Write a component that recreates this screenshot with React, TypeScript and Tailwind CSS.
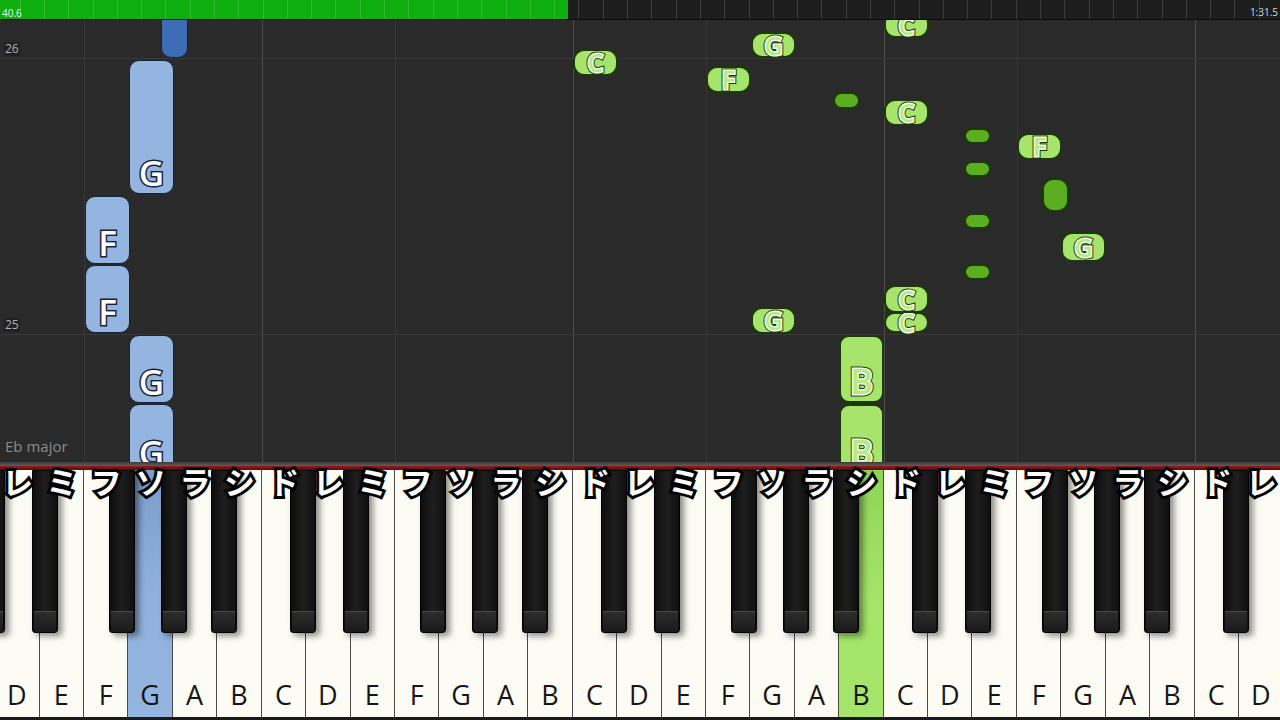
import React from 'react';

const W = 44.43;
const X0 = -4.8;
const WHITE = ['D', 'E', 'F', 'G', 'A', 'B', 'C'];
const KANA = ['レ', 'ミ', 'フ', 'ソ', 'ラ', 'シ', 'ド'];
const BLACK_OFFSET: Record<string, number> = { C: -3.5, D: 5, F: -6.5, G: 1, A: 7 };

type Kind = 'blue' | 'bdark' | 'green' | 'gdark';
type Note = { x: number; y: number; w: number; h: number; kind: Kind; label?: string };

// page coordinates, roll starts at y=20
const notes: Note[] = [
  { x: 161, y: 0, w: 27, h: 58, kind: 'bdark' },
  { x: 129, y: 60, w: 45, h: 134, kind: 'blue', label: 'G' },
  { x: 85, y: 196, w: 45, h: 68, kind: 'blue', label: 'F' },
  { x: 85, y: 265, w: 45, h: 68, kind: 'blue', label: 'F' },
  { x: 129, y: 335, w: 45, h: 68, kind: 'blue', label: 'G' },
  { x: 129, y: 404, w: 45, h: 70, kind: 'blue', label: 'G' },
  { x: 573, y: 49, w: 45, h: 27, kind: 'green', label: 'C' },
  { x: 751, y: 32, w: 45, h: 26, kind: 'green', label: 'G' },
  { x: 706, y: 66, w: 45, h: 27, kind: 'green', label: 'F' },
  { x: 833, y: 92, w: 27, h: 17, kind: 'gdark' },
  { x: 884, y: 12, w: 45, h: 26, kind: 'green', label: 'C' },
  { x: 884, y: 99, w: 45, h: 27, kind: 'green', label: 'C' },
  { x: 964, y: 128, w: 27, h: 16, kind: 'gdark' },
  { x: 964, y: 161, w: 27, h: 16, kind: 'gdark' },
  { x: 964, y: 213, w: 27, h: 16, kind: 'gdark' },
  { x: 964, y: 264, w: 27, h: 16, kind: 'gdark' },
  { x: 1017, y: 133, w: 45, h: 27, kind: 'green', label: 'F' },
  { x: 1042, y: 178, w: 27, h: 34, kind: 'gdark' },
  { x: 1061, y: 232, w: 45, h: 30, kind: 'green', label: 'G' },
  { x: 884, y: 312, w: 45, h: 21, kind: 'green', label: 'C' },
  { x: 884, y: 285, w: 45, h: 28, kind: 'green', label: 'C' },
  { x: 751, y: 307, w: 45, h: 27, kind: 'green', label: 'G' },
  { x: 839, y: 335, w: 45, h: 68, kind: 'green', label: 'B' },
  { x: 839, y: 404, w: 45, h: 70, kind: 'green', label: 'B' },
];

const noteClass: Record<Kind, string> = {
  blue: 'bg-[#94b5df] border-[1.5px] border-[#16223a]',
  bdark: 'bg-[#3b6cb4] border-[1.5px] border-[#16223a] rounded-[7px]',
  green: 'bg-[#a6e46c] border-2 border-[#1c3a08]',
  gdark: 'bg-[#5aae20] border-2 border-[#1c3a08] rounded-[7px]',
};

const whiteKeys = Array.from({ length: 29 }, (_, i) => WHITE[i % 7]);

const blackKeys: number[] = [];
// C# left of first D
blackKeys.push(X0 + BLACK_OFFSET.C - 13);
whiteKeys.forEach((n, i) => {
  if (i < 28 && BLACK_OFFSET[n] !== undefined) {
    blackKeys.push(X0 + W * (i + 1) + BLACK_OFFSET[n] - 13);
  }
});

const GreenLetter: React.FC<{ label: string; big: boolean }> = ({ label, big }) => (
  <span className={`grid leading-none font-semibold ${big ? 'text-[35px]' : 'text-[25px]'}`}>
    <span className="col-start-1 row-start-1 text-[#1c3a08] [-webkit-text-stroke:5px_#1c3a08]">{label}</span>
    <span className="col-start-1 row-start-1 text-[#b4ec80] [-webkit-text-stroke:3px_#f6fff0] [paint-order:stroke_fill]">
      {label}
    </span>
  </span>
);

const App: React.FC = () => {
  return (
    <div className="w-[1280px] h-[720px] overflow-hidden bg-[#2a2a2a] font-['Open_Sans',sans-serif]">
      {/* Progress bar */}
      <div className="relative h-[20px] bg-[#1d1d1d] border-b border-[#0b0b0b]">
        <div className="h-full w-[568px] bg-[#0fae0f]" />
        <div className="absolute inset-0 flex ml-[-3.7px]">
          {Array.from({ length: 54 }).map((_, i) => (
            <div key={i} className="h-full w-[24.3px] shrink-0 border-r border-white/15" />
          ))}
        </div>
        <span className="absolute left-[2px] bottom-[1px] text-[10px] leading-none text-[#e8f5e8]">40.6</span>
        <span className="absolute right-[2px] bottom-[2px] text-[10px] leading-none text-[#d8d8d8]">1:31.5</span>
      </div>

      {/* Roll */}
      <div className="relative h-[442px] overflow-hidden bg-[#2a2a2a]">
        {/* grid columns, one per white key */}
        <div className="absolute inset-0 flex ml-[-4.8px]">
          {whiteKeys.map((n, i) => (
            <div
              key={i}
              className={`h-full w-[44.43px] shrink-0 ${
                n === 'C' ? 'border-l border-[#4c4c4c]' : n === 'F' ? 'border-l border-[#363636]' : ''
              }`}
            />
          ))}
        </div>
        {/* measure rows */}
        <div className="absolute inset-0 flex flex-col pt-[38px]">
          <div className="h-[276px] border-t border-[#383838]" />
          <div className="border-t border-[#383838]" />
        </div>
        <span className="absolute left-[4px] top-[22px] px-[1px] text-[12px] leading-[14px] text-[#b0b0b0] bg-[#1e1e1e]/70">26</span>
        <span className="absolute left-[4px] top-[298px] px-[1px] text-[12px] leading-[14px] text-[#b0b0b0] bg-[#1e1e1e]/70">25</span>
        <span className="absolute left-[5px] top-[419px] text-[15px] leading-none text-[#8a8a8a]">Eb major</span>

        {notes.map((n, i) => {
          const tall = n.h > 50;
          return (
            <div
              key={i}
              className={`absolute flex justify-center ${
                tall ? 'items-end pb-[3px] rounded-[10px]' : 'items-center rounded-[11px]'
              } ${noteClass[n.kind]}`}
              style={{ left: n.x, top: n.y - 20, width: n.w, height: n.h }}
            >
              {n.label &&
                (n.kind === 'blue' ? (
                  <span className="text-[35px] leading-none font-semibold text-white [-webkit-text-stroke:3px_#16223a] [paint-order:stroke_fill]">
                    {n.label}
                  </span>
                ) : (
                  <GreenLetter label={n.label} big={tall} />
                ))}
            </div>
          );
        })}
      </div>

      {/* Keyboard */}
      <div className="relative h-[258px] flex flex-col bg-[#111]">
        <div className="flex flex-col h-[8px]">
          <div className="h-[4px] bg-gradient-to-b from-[#3a3a3a] to-[#5e5e5e]" />
          <div className="h-[4px] bg-gradient-to-b from-[#9a1c1c] to-[#5a0c0c]" />
        </div>
        <div className="relative flex-1 border-b-[3px] border-[#1a1a1a]">
          <div className="flex h-full ml-[-4.8px]">
            {whiteKeys.map((n, i) => (
              <div
                key={i}
                className={`h-full w-[44.43px] shrink-0 border-r border-[#4a4a4a] flex items-end justify-center pb-[9px] ${
                  i === 3
                    ? 'bg-gradient-to-b from-[#7b9dcb] via-[#8fb1dc] to-[#94b5df]'
                    : i === 19
                    ? 'bg-gradient-to-b from-[#8fd455] via-[#a3e468] to-[#a6e46c]'
                    : 'bg-[#fcfcf4]'
                }`}
              >
                <span className="text-[27px] leading-none text-[#151515]">{n}</span>
              </div>
            ))}
          </div>
          {blackKeys.map((x, i) => (
            <div
              key={i}
              className="absolute top-0 h-[163px] w-[26px] rounded-b-[3px] border border-black bg-gradient-to-r from-[#0d0d0d] via-[#1e1e1e] to-[#0f0f0f] shadow-[4px_3px_6px_rgba(0,0,0,0.45)]"
              style={{ left: x }}
            >
              <div className="absolute bottom-0 left-[1px] right-[1px] h-[21px] border-t border-[#4a4a4a] bg-gradient-to-b from-[#2c2c2c] to-[#1a1a1a] rounded-b-[2px]" />
            </div>
          ))}
        </div>
        {/* solfege labels */}
        <div className="absolute top-[1px] left-0 flex ml-[-4.8px] h-[34px]">
          {whiteKeys.map((_, i) => (
            <div
              key={i}
              className="w-[44.43px] shrink-0 flex items-center justify-center text-[31px] leading-none font-bold text-white font-['Noto_Sans_CJK_JP',sans-serif] [-webkit-text-stroke:6px_#000] [paint-order:stroke_fill]"
            >
              {KANA[i % 7]}
            </div>
          ))}
        </div>
      </div>
    </div>
  );
};

export default App;
